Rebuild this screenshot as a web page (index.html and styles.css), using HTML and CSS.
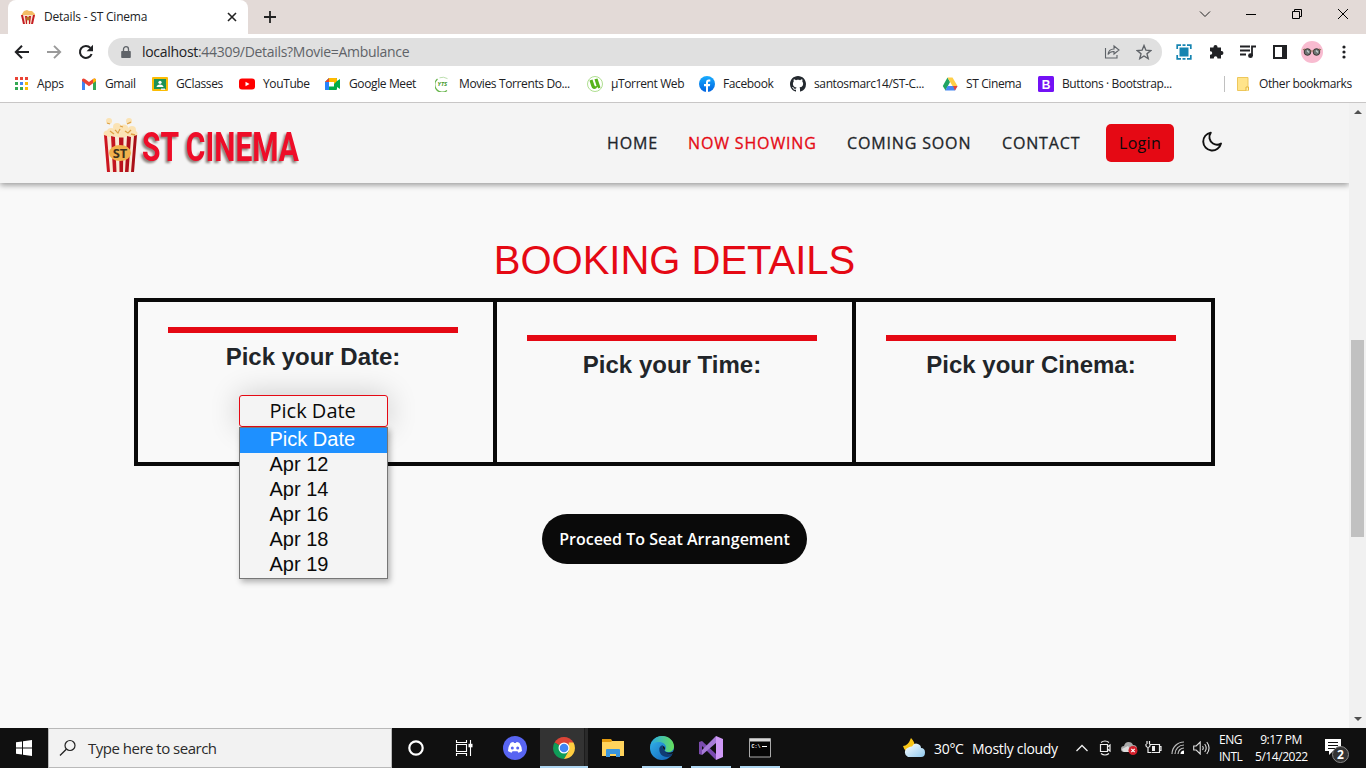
FILE: index.html
```html
<!DOCTYPE html>
<html lang="en">
<head>
<meta charset="utf-8">
<title>Details - ST Cinema</title>
<link rel="stylesheet" href="styles.css">
</head>
<body>
<svg width="0" height="0" class="defs">
  <defs>
    <linearGradient id="stripe" x2="1" y2="0"><stop offset="0" stop-color="#d01722"/><stop offset="1" stop-color="#a50f18"/></linearGradient>
    <linearGradient id="edge" x1="0" y1="0" x2="1" y2="1"><stop offset="0" stop-color="#35b9ee"/><stop offset="1" stop-color="#0f5cb5"/></linearGradient>
    <linearGradient id="edgeTop" x2="1" y2="0"><stop offset="0" stop-color="#28a8ea"/><stop offset="1" stop-color="#66e05a"/></linearGradient>
    <linearGradient id="fb" x2="0" y2="1"><stop offset="0" stop-color="#18acfe"/><stop offset="1" stop-color="#0163e0"/></linearGradient>
    <linearGradient id="cloud" x2="1" y2="1"><stop offset="0" stop-color="#fff"/><stop offset="1" stop-color="#8fc9ee"/></linearGradient>
  </defs>
</svg>

<div class="tabstrip">
  <div class="tab">
    <svg width="16" height="16" viewBox="0 0 16 16"><path d="M2 5l2-3 3-1 2 1 3 0 3 3v3H1z" fill="#f3bd66"/><path d="M1 6l14 0-2 9H3z" fill="#f8e5d0"/><path d="M1 6l2 0 2 9H3zM5 7h2v8H6zM9 7h2l-1 8H9zM13 6h2l-2 9h-2z" fill="#c51d24"/><circle cx="8" cy="9.500" r="2" fill="#b57525"/></svg>
    <span class="tab-title">Details - ST Cinema</span>
    <svg class="tab-close" width="10" height="10" viewBox="0 0 10 10"><path d="M1 1l8 8M9 1L1 9" stroke="#222" stroke-width="1.600"/></svg>
  </div>
  <svg class="newtab" width="12" height="12" viewBox="0 0 12 12"><path d="M6 0v12M0 6h12" stroke="#222" stroke-width="1.800"/></svg>
  <div class="winctl">
    <svg width="12" height="12" viewBox="0 0 12 12"><path d="M1 3.500l5 5 5-5" fill="none" stroke="#222"/></svg>
    <svg width="12" height="12" viewBox="0 0 12 12"><path d="M1 6.500h10" stroke="#000"/></svg>
    <svg width="12" height="12" viewBox="0 0 12 12"><path d="M1.500 3.500h7v7h-7zM3.500 3.500v-2h7v7h-2" fill="none" stroke="#000"/></svg>
    <svg width="12" height="12" viewBox="0 0 12 12"><path d="M1 1l10 10M11 1L1 11" stroke="#000"/></svg>
  </div>
</div>

<div class="toolbar">
  <div class="navbtns">
    <svg width="16" height="16" viewBox="0 0 16 16"><path d="M15 8H2M8 1.800L1.800 8 8 14.200" fill="none" stroke="#202124" stroke-width="2"/></svg>
    <svg width="16" height="16" viewBox="0 0 16 16"><path d="M1 8h13M8 1.800L14.200 8 8 14.200" fill="none" stroke="#9a9a9a" stroke-width="1.900"/></svg>
    <svg width="16" height="16" viewBox="0 0 16 16"><path d="M13.600 10A6 6 0 1 1 12.400 3.900" fill="none" stroke="#202124" stroke-width="2.100"/><path d="M15 .8v6.400H8.600z" fill="#202124"/></svg>
  </div>
  <div class="omnibox">
    <svg width="10" height="13" viewBox="0 0 10 13"><path d="M1 5h8q.8 0 .8.800V11q0 1-.8 1H1q-.8 0-.8-1V5.800Q.2 5 1 5z" fill="#5f6368"/><path d="M2.500 5V3.200a2.500 2.500 0 0 1 5 0V5" fill="none" stroke="#5f6368" stroke-width="1.300"/></svg>
    <span class="url"><b>localhost</b>:44309/Details?Movie=Ambulance</span>
    <svg class="share" width="16" height="16" viewBox="0 0 16 16"><path d="M1.500 4v10h11.500v-3M4 10.500q.5-5.500 6-5.500V2l5 4-5 4V7.500q-4-.2-6 3z" fill="none" stroke="#5f6368" stroke-width="1.100"/></svg>
    <svg width="16" height="16" viewBox="0 0 16 16"><path d="M8 1.600l1.900 4.600 4.800.4-3.700 3.200 1.200 4.800L8 12l-4.200 2.600L5 9.800 1.300 6.600l4.800-.4z" fill="none" stroke="#5f6368" stroke-width="1.400"/></svg>
  </div>
  <div class="extensions">
    <svg width="16" height="16" viewBox="0 0 16 16"><path d="M3.500 3.500h9v9h-9z" fill="#1584b1"/><path d="M1.200 5V1.200H5M6.500 1.200h3M11 1.200h3.800V5M14.800 11v3.800H11M9.500 14.800h-3M5 14.800H1.200V11" fill="none" stroke="#1584b1" stroke-width="1.700"/></svg>
    <svg width="16" height="16" viewBox="0 0 16 16"><path d="M2 3.500h3.500V3a2 2 0 0 1 4 0v.5H13V7h.5a1.900 1.900 0 0 1 0 3.900H13v3.600H9.400V14a1.800 1.800 0 0 0-3.600 0v.5H2v-3.700h.5a1.700 1.700 0 0 0 0-3.500H2z" fill="#202124"/></svg>
    <svg width="16" height="16" viewBox="0 0 16 16"><path d="M0 2.500h10M0 6.500h10M0 10.500h6M12 12V2.500h4" fill="none" stroke="#202124" stroke-width="1.800"/><circle cx="10.500" cy="11.700" r="2.400" fill="#202124"/></svg>
    <svg width="16" height="16" viewBox="0 0 16 16"><path d="M2 2h12v12H2z" fill="none" stroke="#202124" stroke-width="2"/><path d="M10 2h4v12h-4z" fill="#202124"/></svg>
    <svg width="22" height="22" viewBox="0 0 22 22"><circle cx="11" cy="11" r="11" fill="#f8bbd0"/><g fill="#6e7575" stroke="#3a3532"><circle cx="6.500" cy="11" r="3.300"/><circle cx="15.500" cy="11" r="3.300"/></g><path d="M2 9l2-1M20 9l-2-1M9.500 10h3" stroke="#8a6d50" stroke-width="1.200"/><path d="M6 9.500l2 2M15 9.500l2 2" stroke="#c4d0ce" stroke-width="1.300"/></svg>
    <svg width="16" height="16" viewBox="0 0 16 16" fill="#202124"><circle cx="8" cy="3" r="1.600"/><circle cx="8" cy="8" r="1.600"/><circle cx="8" cy="13" r="1.600"/></svg>
  </div>
</div>

<div class="bookmarks">
  <a class="bm"><svg viewBox="0 0 16 16"><path d="M2 1h3v3H2zM7 1h3v3H7zM12 1h3v3h-3z" fill="#ea4335"/><path d="M2 6h3v3H2z" fill="#34a853"/><path d="M7 6h3v3H7z" fill="#4285f4"/><path d="M12 6h3v3h-3z" fill="#fbbc04"/><path d="M2 11h3v3H2zM7 11h3v3H7z" fill="#34a853"/><path d="M12 11h3v3h-3z" fill="#fbbc04"/></svg><span>Apps</span></a>
  <a class="bm"><svg viewBox="0 0 16 16"><path d="M1 4l3 2v8H1z" fill="#4285f4"/><path d="M12 6l3-2v10h-3z" fill="#34a853"/><path d="M1 5V3.500Q2.200 1.800 4 3l4 3 4-3q1.800-1.200 3 .5V5l-7 5.200z" fill="#ea4335"/><path d="M12 3q1.800-1.200 3 .5V5l-3 2.300z" fill="#fbbc04"/></svg><span>Gmail</span></a>
  <a class="bm"><svg viewBox="0 0 16 16"><rect y="1" width="16" height="14" rx="1" fill="#fbbc04"/><path d="M2 3h12v10H2z" fill="#1e9256"/><circle cx="8" cy="6.300" r="1.600" fill="#fff"/><path d="M4.500 11q.5-2.500 3.500-2.500T11.500 11z" fill="#fff"/><path d="M9 12.500h4V14H9z" fill="#eee"/></svg><span>GClasses</span></a>
  <a class="bm"><svg viewBox="0 0 16 16"><rect y="2.500" width="16" height="11" rx="3" fill="#f00"/><path d="M6.500 5.700v4.600l4-2.300z" fill="#fff"/></svg><span>YouTube</span></a>
  <a class="bm"><svg viewBox="0 0 16 16"><path d="M4 2h7q1 0 1 1v2l3-2v10l-3-2v2q0 1-1 1H1q-1 0-1-1V6z" fill="#00ac47"/><path d="M4 2v4H0z" fill="#ea4335"/><path d="M0 6h4v8H1q-1 0-1-1z" fill="#2684fc"/><path d="M4 2h7q1 0 1 1v2L9 8V6H4z" fill="#ffba00"/><path d="M4 6h5v4.500H4z" fill="#fff"/></svg><span>Google Meet</span></a>
  <a class="bm"><svg viewBox="0 0 16 16"><path d="M2.500 3a7 7 0 0 0 9.500 11.500" fill="none" stroke="#67b54b" stroke-width="1.200"/><path d="M4.500 1.800q4-1.500 8 .8" fill="none" stroke="#9fd08b" stroke-width=".7"/><text x="2.500" y="10" class="yts">YTS</text></svg><span>Movies Torrents Do...</span></a>
  <a class="bm"><svg viewBox="0 0 16 16"><circle cx="8" cy="8" r="7.500" fill="#fff" stroke="#9bd673" stroke-width=".8"/><path d="M2.500 4.500l3-1 2 6q.8 1.500 2 .2l-2-6.500 3-.7 3 9-2.200 1-1-1.700q-1 2.500-3.500 2.200Q5 13 4.200 10z" fill="#58b31c"/></svg><span>µTorrent Web</span></a>
  <a class="bm"><svg viewBox="0 0 16 16"><circle cx="8" cy="8" r="8" fill="url(#fb)"/><path d="M7 16v-5.700H5V8h2V6.300Q7 3.400 9.800 3.400h1.500v2h-1.200Q9 5.400 9 6.500V8h2.200l-.4 2.300H9V16z" fill="#fff"/></svg><span>Facebook</span></a>
  <a class="bm"><svg viewBox="0 0 16 16"><path fill="#24292f" d="M8 0C3.580 0 0 3.580 0 8c0 3.540 2.290 6.530 5.470 7.590.4.070.55-.17.55-.38 0-.19-.01-.82-.01-1.490-2.010.37-2.530-.49-2.690-.94-.09-.23-.48-.94-.82-1.130-.28-.15-.68-.52-.01-.53.63-.01 1.080.58 1.230.82.72 1.210 1.870.87 2.330.66.07-.52.28-.87.51-1.070-1.780-.2-3.640-.89-3.640-3.950 0-.87.31-1.590.82-2.150-.08-.2-.36-1.020.08-2.120 0 0 .67-.21 2.200.82.640-.18 1.320-.27 2-.27s1.360.09 2 .27c1.530-1.040 2.200-.82 2.200-.82.44 1.100.16 1.920.08 2.120.51.56.82 1.270.82 2.150 0 3.070-1.870 3.750-3.650 3.950.29.25.54.73.54 1.480 0 1.070-.01 1.930-.01 2.200 0 .21.15.46.55.38A8 8 0 0 0 16 8c0-4.420-3.580-8-8-8z"/></svg><span>santosmarc14/ST-C...</span></a>
  <a class="bm"><svg viewBox="0 0 16 16"><path d="M5.500 1.500L8 6l-4.500 8.500L.8 10z" fill="#1fa463"/><path d="M5.500 1.500h5l5 8.500h-5z" fill="#ffcf48"/><path d="M5.600 10h9.900l-2.500 4.500H3.200z" fill="#4688f4"/><path d="M11 10h4.500L13 14.500z" fill="#ea4335"/></svg><span>ST Cinema</span></a>
  <a class="bm"><svg viewBox="0 0 16 16"><rect width="16" height="16" rx="1.500" fill="#7311f5"/><text x="8" y="12.500" class="bs">B</text></svg><span>Buttons · Bootstrap...</span></a>
  <a class="bm other"><svg viewBox="0 0 16 16"><path d="M2.500 1.500h10.500v13H2.500z" fill="#ffe48a" stroke="#eec75b"/><path d="M11 14.500v-3.500h2.500v3.500" fill="#fff0b5" stroke="#e3b53c"/></svg><span>Other bookmarks</span></a>
</div>

<div class="viewport">
  <div class="page">
    <header class="site-header">
      <div class="logo">
        <svg width="36" height="58" viewBox="0 0 36 58">
          <g fill="#fbe3b4">
            <circle cx="6" cy="5" r="3"/><circle cx="26" cy="5" r="3"/><circle cx="8" cy="16" r="4"/><circle cx="14" cy="11" r="4"/><circle cx="21" cy="13" r="4.500"/><circle cx="29" cy="14" r="4"/><circle cx="4" cy="18" r="3.500"/><circle cx="31" cy="18" r="3.500"/><path d="M3 16h30v8H3z"/>
          </g>
          <path d="M4 7l3 1M24 8l4-2M12 14l3 3 2-4M22 15l3 2 3-3M17 10l3 1M7 15l4 3M28 18l4 1" stroke="#dda044" stroke-width="1.300" fill="none"/>
          <path d="M1 19l5 2 5-1 7 2 7-2 5 1 4-2-3 37H4z" fill="#f8ead6"/>
          <path d="M1 19l3 1 3 36H4zM8 20l4 1 1.500 35h-3.500zM16 21.500h4.500l-.5 34.500h-3.500zM24 20l4 1-2.500 35h-3.500zM31 20l3-1-3 37h-3z" fill="url(#stripe)"/>
          <ellipse cx="17" cy="37" rx="11" ry="8" fill="#f0b14c"/>
          <text x="17" y="41.500" class="bucket-text">ST</text>
        </svg>
        <svg width="164" height="58" viewBox="0 0 164 58">
          <text x="3" y="45" textLength="157" lengthAdjust="spacingAndGlyphs" class="logo-text">ST CINEMA</text>
        </svg>
      </div>
      <nav class="menu">
        <a>HOME</a>
        <a class="active">NOW SHOWING</a>
        <a>COMING SOON</a>
        <a>CONTACT</a>
        <a class="login">Login</a>
        <svg class="moon" width="24" height="24" viewBox="0 0 24 24"><path d="M21 13.500A9 9 0 1 1 10.800 2.600 7.600 7.600 0 0 0 13 13.500Q17 16 21 13.500z" fill="none" stroke="#111" stroke-width="1.900" stroke-linejoin="round"/></svg>
      </nav>
    </header>
    <main class="content">
      <h1 class="title">BOOKING DETAILS</h1>
      <section class="steps">
        <div class="step first">
          <div class="bar"></div>
          <h2>Pick your Date:</h2>
          <div class="picker">
            <div class="select">Pick Date</div>
            <ul class="options">
              <li class="selected">Pick Date</li>
              <li>Apr 12</li>
              <li>Apr 14</li>
              <li>Apr 16</li>
              <li>Apr 18</li>
              <li>Apr 19</li>
            </ul>
          </div>
        </div>
        <div class="step"><div class="bar"></div><h2>Pick your Time:</h2></div>
        <div class="step"><div class="bar"></div><h2>Pick your Cinema:</h2></div>
      </section>
      <button class="proceed">Proceed To Seat Arrangement</button>
    </main>
  </div>
  <div class="scrollbar">
    <svg width="17" height="17" viewBox="0 0 17 17"><path d="M5 11l4-4 4 4z" fill="#505050"/></svg>
    <div class="thumb"></div>
    <svg width="17" height="17" viewBox="0 0 17 17"><path d="M5 6h8l-4 4z" fill="#505050"/></svg>
  </div>
</div>

<div class="taskbar">
  <div class="start"><svg width="16" height="16" viewBox="0 0 16 16" fill="#fff"><path d="M0 2.300L6 1.400v6.100H0zM7 1.200L16 0v7.500H7zM0 8.500h6v6.100l-6-.9zM7 8.500h9V16l-9-1.200z"/></svg></div>
  <div class="search">
    <svg width="18" height="18" viewBox="0 0 18 18"><circle cx="11" cy="6.500" r="5" fill="none" stroke="#222" stroke-width="1.200"/><path d="M7.300 10.200L1 16.500" stroke="#222" stroke-width="1.300"/></svg>
    <span>Type here to search</span>
  </div>
  <div class="apps">
    <div class="app"><svg width="16" height="16" viewBox="0 0 16 16"><circle cx="8" cy="8" r="6.700" fill="none" stroke="#fff" stroke-width="2.200"/></svg></div>
    <div class="app"><svg class="taskview" width="18" height="16" viewBox="0 0 18 16"><path d="M1.500 4.500h10v7h-10zM1.500 0v2.500h10V0M1.500 16v-2.500h10V16M15.500 0v16" fill="none" stroke="#fff" stroke-width="1.100"/><path d="M13.500 3.800h4v3.500h-4z" fill="#fff"/></svg></div>
    <div class="app"><svg width="24" height="24" viewBox="0 0 24 24"><circle cx="12" cy="12" r="12" fill="#5865f2"/><path d="M7.500 7q1.500-.8 3-1l.5.900h2l.5-.9q1.500.2 3 1 2.600 4 2.500 8-1.700 1.300-3.600 1.700l-.9-1.500h-5l-.9 1.500q-1.900-.4-3.600-1.700-.1-4 2.500-8z" fill="#fff"/><circle cx="9.300" cy="12" r="1.500" fill="#5865f2"/><circle cx="14.700" cy="12" r="1.500" fill="#5865f2"/></svg></div>
    <div class="app chrome"><svg width="22" height="22" viewBox="0 0 22 22"><path d="M11 11L1.500 5.500A11 11 0 0 1 20.500 5.500z" fill="#db4437"/><path d="M1.500 5.500A11 11 0 0 0 11 22l4.800-8.200L11 11z" fill="#0f9d58"/><path d="M20.500 5.500A11 11 0 0 1 11 22l4.800-8.200V5.500z" fill="#ffcd40"/><circle cx="11" cy="11" r="5.500" fill="#fff"/><circle cx="11" cy="11" r="4.300" fill="#4285f4"/></svg></div>
    <div class="app"><svg width="22" height="20" viewBox="0 0 22 20"><path d="M0 1h9l2 3H0z" fill="#e39a0e"/><path d="M0 4h9l1-1h12v15H0z" fill="#ffd35c"/><path d="M4 19v-7q0-1 1-1h12q1 0 1 1v7h-4v-3H8v3z" fill="#3a96dd"/></svg></div>
    <div class="app open"><svg width="24" height="24" viewBox="0 0 24 24"><circle cx="12" cy="12" r="12" fill="url(#edge)"/><path d="M.2 10C1.500 4 6.500 0 12 0c7 0 12 5 12 10.500 0 3.500-2.500 5.500-5.500 5.500-2 0-3.500-.8-3.500-1.600 0-.7 1-1 1-3C16 8.500 13 6 9 6 5 6 1.500 8 .2 10z" fill="url(#edgeTop)"/><path d="M9.300 12.500q.7-3 3.700-3.200-1 5 4 7.500 3 1 6 0-.5 1.500-2 3.300-4 1.800-8-.1-4-2.300-3.700-7.500z" fill="#103c74"/><path d="M13 10q2 .4 2 2.500-1.300 2 0 3.200 3.500 2 8 0l1-2v7l-2.500.5 1.500-4q-4 1.500-7-.8t-3-5q0-1 0-1.400z" fill="#101010"/></svg></div>
    <div class="app open"><svg width="24" height="24" viewBox="0 0 24 24"><path d="M0 6l3-1v14l-3-1z" fill="#7c4bad"/><path d="M3 5l14 13v6L3 10z" fill="#7a4bb0"/><path d="M3 14L17 0v7L3 19z" fill="#a77bd8"/><path d="M17 0l7 3v18l-7 3z" fill="#cf99f6"/></svg></div>
    <div class="app open"><svg width="22" height="20" viewBox="0 0 22 20"><path d="M.5.5h21v18.500H.5z" fill="#050505" stroke="#aaa"/><path d="M1 1h20v2.500H1z" fill="#d8d8d8"/><path d="M13 8.500h5" stroke="#fff"/><text x="2.500" y="9.500" class="cmd">C:\</text></svg></div>
  </div>
  <div class="tray">
    <svg width="24" height="20" viewBox="0 0 24 20"><path d="M1 8q5 0 8-8 4 4 4 9t-4 6Q3 15 1 8z" fill="#f8c516"/><path d="M6 19a5 5 0 0 1-.5-9Q8 8 10 8.500q2-4 6-2.500 3 1 3 4 4 0 4 4.500T19 19z" fill="url(#cloud)"/></svg>
    <span class="temp">30°C</span>
    <span class="wx">Mostly cloudy</span>
    <svg width="14" height="14" viewBox="0 0 14 14"><path d="M1.500 10L7 4.500l5.500 5.500" fill="none" stroke="#eee" stroke-width="1.300"/></svg>
    <svg width="14" height="18" viewBox="0 0 14 18"><path d="M2.500 5.500h7v7h-7zM9.500 8l2.500-2v6l-2.500-2M3 3.500q4-3 8 0M3 14.500q4 3 8 0" fill="none" stroke="#eee" stroke-width="1.200"/></svg>
    <svg width="17" height="14" viewBox="0 0 17 14"><path d="M3 11a3 3 0 0 1 0-6Q4 1 7.500 1T12 4q4 0 4 4l-2 3z" fill="#a9a9a9"/><path d="M1 8L7 5l5 6H3q-2-1-2-3z" fill="#ddd"/><circle cx="12" cy="9.500" r="4.500" fill="#d31f2b"/><path d="M10.300 7.800l3.400 3.400m0-3.400l-3.400 3.400" stroke="#fff" stroke-width="1.200"/></svg>
    <svg width="17" height="14" viewBox="0 0 17 14"><path d="M5.500 3.500h9v8h-8M3 6v5.500h3M1 3v2q2 3 4 0V3M2 0v3M4.500 0v3M14.500 5.500h1.500v4h-1.500" fill="none" stroke="#eee" stroke-width="1.200"/><path d="M7 5h3v5H7z" fill="#eee"/></svg>
    <svg width="14" height="14" viewBox="0 0 14 14"><g fill="none" stroke="#bbb" stroke-width="1.200"><path d="M1 13A12 12 0 0 1 13 1M4 13a9 9 0 0 1 9-9M7 13a6 6 0 0 1 6-6"/></g><path d="M9.500 13a3.500 3.500 0 0 1 3.500-3.500V13z" fill="#fff"/></svg>
    <svg width="17" height="14" viewBox="0 0 17 14"><path d="M.7 5h2.500l4-4v12l-4-4H.7zM9.500 5q1.500 2 0 4M11.700 3q3 4 0 8M13.800 1q4.500 6 0 12" fill="none" stroke="#ddd" stroke-width="1.100"/></svg>
    <div class="two lang"><span>ENG</span><span>INTL</span></div>
    <div class="two clock"><span>9:17 PM</span><span>5/14/2022</span></div>
    <svg class="notif" width="26" height="26" viewBox="0 0 26 26"><path d="M1 1h16v12H9l-4 4v-4H1z" fill="#fff"/><path d="M4 4.500h10M4 7.500h10M4 10.500h8" stroke="#111"/><circle cx="16.500" cy="16.500" r="8" fill="#333" stroke="#888"/><text x="16.500" y="20.500" class="count">2</text></svg>
  </div>
</div>
</body>
</html>
```
FILE: styles.css
```css
* { box-sizing: border-box; }
body { margin: 0; width: 1366px; height: 768px; overflow: hidden; display: flex; flex-direction: column; font-family: "Open Sans", "Noto Sans", sans-serif; background: #fff; }
svg { display: block; flex: none; }
.defs { position: absolute; }

.tabstrip { height: 34px; background: #e3dad7; display: flex; align-items: center; padding-left: 8px; flex: none; }
.tab { width: 240px; height: 34px; background: #fff; border-radius: 8px 8px 0 0; display: flex; align-items: center; padding: 0 12px; }
.tab-title { font-size: 12px; letter-spacing: -.2px; margin-left: 8px; padding-bottom: 1px; flex: 1; color: #202124; white-space: nowrap; }
.tab-close { margin-right: -1px; }
.newtab { margin-left: 16px; }
.winctl { display: flex; gap: 34px; margin-left: auto; padding-right: 17px; align-self: flex-start; padding-top: 8px; }

.toolbar { height: 36px; display: flex; align-items: center; flex: none; }
.navbtns { width: 108px; display: flex; gap: 16px; padding-left: 14px; }
.omnibox { width: 1054px; height: 28px; border-radius: 14px; background: #e0e0e0; display: flex; align-items: center; padding: 0 10px 0 13px; }
.url { flex: 1; margin-left: 11px; padding-bottom: 1px; font-size: 14px; letter-spacing: -.3px; color: #5f6368; white-space: nowrap; }
.url b { font-weight: 400; color: #202124; }
.share { margin-right: 16px; }
.extensions { display: grid; grid-template-columns: repeat(6, 32px); justify-items: center; align-items: center; margin-left: 6px; }

.bookmarks { height: 33px; border-bottom: 1px solid #c8c6c6; display: grid; grid-template-columns: 68px 71px 87px 86px 110px 152px 112px 91px 152px 96px 186px 130px; padding: 0 0 4px 13px; align-items: center; flex: none; }
.bm { display: flex; gap: 8px; align-items: center; font-size: 12px; letter-spacing: -.38px; color: #202124; white-space: nowrap; }
.bm span { padding-bottom: 1px; }
.bm svg { width: 16px; height: 16px; }
.other { border-left: 1px solid #c0c0c0; padding-left: 10px; height: 16px; }
.yts { font: italic bold 6px "Open Sans", sans-serif; letter-spacing: 0; fill: #4a9b32; }
.bs { font: bold 12px "Liberation Sans", sans-serif; letter-spacing: 0; fill: #fff; text-anchor: middle; }

.viewport { height: 625px; display: flex; flex: none; }
.page { width: 1349px; background: #f9f9f9; }
.site-header { height: 80px; background: #f4f4f4; box-shadow: 0 2px 6px rgba(0,0,0,.4); display: flex; align-items: center; padding-left: 103px; clip-path: inset(0 0 -14px 0); }
.logo { display: flex; margin-top: 4px; }
.bucket-text { font: bold 13px "Open Sans", sans-serif; fill: #3c321e; text-anchor: middle; }
.logo-text { font: bold 41px Roboto, sans-serif; fill: #ee0d28; filter: drop-shadow(-2px 2px 1px #8d827c); }
.menu { display: grid; grid-template-columns: 81px 159px 155px 104px 68px 24px; align-items: center; margin-left: 304px; font-size: 16px; font-weight: 500; letter-spacing: .85px; color: #212529; -webkit-text-stroke: .3px currentColor; white-space: nowrap; }
.active { color: #e50914; }
.login { height: 38px; line-height: 38px; border-radius: 5px; background: #e50914; text-align: center; letter-spacing: .3px; color: #0a0a0a; font-weight: 400; -webkit-text-stroke: 0; }
.moon { margin-left: 26px; margin-top: -3px; }

.content { display: flex; flex-direction: column; align-items: center; padding-top: 53px; }
.title { margin: 0; font: 400 40px/48px "Liberation Sans", Arial, sans-serif; color: #e50914; }
.steps { width: 1081px; height: 168px; margin-top: 14px; border: solid #0a0a0a; border-width: 4px 0 4px 4px; display: grid; grid-template-columns: repeat(3, 359px); grid-template-rows: 160px; }
.step { border-right: 4px solid #0a0a0a; padding: 33px 35px 0 30px; display: flex; flex-direction: column; align-items: center; }
.step.first { padding-top: 25px; }
.bar { width: 290px; height: 6px; background: #e50914; flex: none; }
.step h2 { margin: 10px 0 0; font: 700 24px/28px "Liberation Sans", Arial, sans-serif; color: #212529; white-space: nowrap; }
.picker { width: 149px; margin-top: 24px; position: relative; z-index: 2; }
.select { height: 32px; border: 1px solid #e50914; border-radius: 3px; background: #f4f4f4; padding-left: 30px; font-size: 20px; line-height: 30px; color: #0a0a0a; box-shadow: 0 0 30px rgba(0,0,0,.2); white-space: nowrap; }
.options { position: absolute; top: 32px; left: 0; width: 149px; margin: 0; padding: 0; list-style: none; height: 152px; border: 1px solid #767676; background: #f4f4f4; font: 20px/25px "Liberation Sans", Arial, sans-serif; color: #0a0a0a; box-shadow: 2px 3px 6px rgba(0,0,0,.3); }
.options li { padding-left: 30px; height: 25px; line-height: 23px; }
.options .selected { background: #1e90ff; color: #fff; }
.proceed { width: 265px; height: 50px; margin-top: 48px; border: 0; padding: 0; border-radius: 25px; background: #0a0a0a; color: #fff; font: 600 16px "Open Sans", sans-serif; white-space: nowrap; }

.scrollbar { width: 17px; background: #f1f1f1; display: flex; flex-direction: column; justify-content: space-between; }
.thumb { width: 13px; height: 197px; background: #c1c1c1; margin: 220px 0 auto 2px; }

.taskbar { height: 40px; background: #101010; display: flex; flex: none; }
.start { width: 48px; display: grid; place-items: center; }
.search { width: 344px; background: #f2f2f2; border: 1px solid #b9b9b9; display: flex; align-items: center; padding-left: 10px; font-size: 15px; letter-spacing: -.5px; color: #2b2b2b; }
.search span { margin-left: 11px; }
.apps { display: grid; grid-template-columns: 48px 50px 50px 48px 49px 49px 49px 49px; }
.app { display: grid; place-items: center; }
.taskview { margin-right: 3px; }
.chrome { background: linear-gradient(90deg, #333 44px, #1c1c1c 44px, #1c1c1c 45px, #2a2a2a 45px); border-bottom: 2px solid #aed6f1; padding-top: 2px; }
.open { background: linear-gradient(#aed6f1, #aed6f1) center bottom / 40px 2px no-repeat; }
.cmd { font: bold 5px "Liberation Mono", monospace; fill: #fff; }
.tray { display: grid; grid-template-columns: 32px 38px 103px 23px 23px 24px 26px 22px 26px 36px 69px 40px; margin-left: auto; align-items: center; color: #fff; width: 464px; white-space: nowrap; }
.temp, .wx { font-size: 14px; letter-spacing: -.3px; }
.two { display: flex; flex-direction: column; font-size: 12px; line-height: 17px; }
.lang { letter-spacing: -.5px; }
.clock { text-align: center; letter-spacing: -.45px; width: 52px; margin-top: -1px; }
.notif { margin-top: 5px; }
.count { font: bold 12px "Open Sans", sans-serif; fill: #fff; text-anchor: middle; }
```
